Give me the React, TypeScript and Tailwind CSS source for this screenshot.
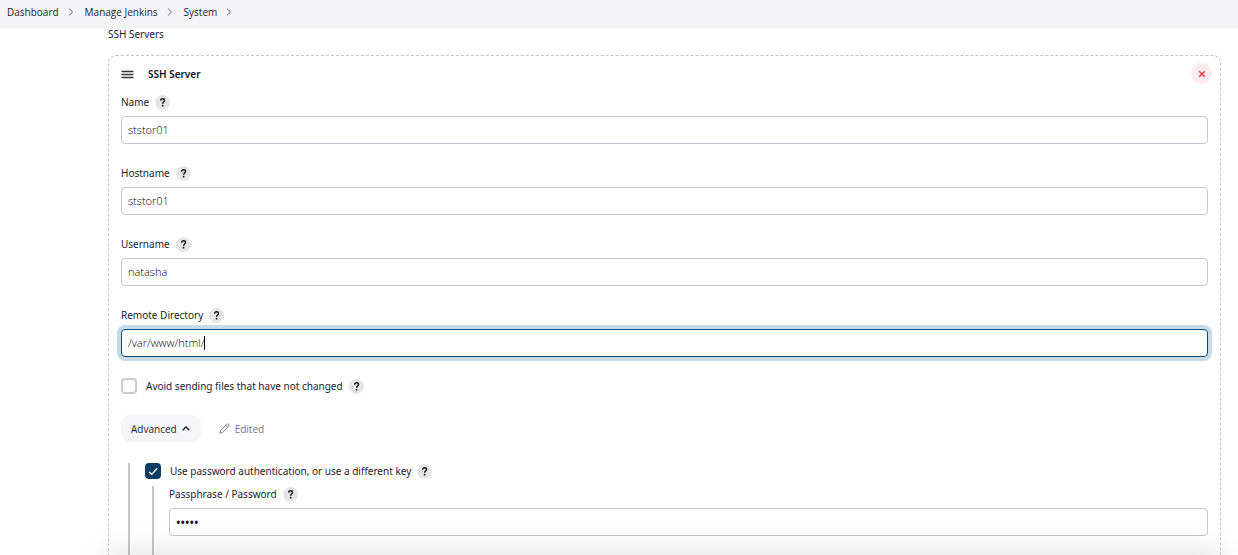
import { useState } from 'react'
import type { ReactNode } from 'react'

const breadcrumbs = ['Dashboard', 'Manage Jenkins', 'System']

const inputStyle =
  'h-7 w-full rounded border border-[#bfc9cf] bg-white px-[6px] pb-[2px] font-["Open_Sans",sans-serif] text-[11px] font-light text-black outline-none'

const passwordStyle =
  'h-7 w-full rounded border border-[#bfc9cf] bg-white px-[6px] font-["Noto_Sans",sans-serif] text-[12px] font-medium text-[#14141f] outline-none'

function HelpButton({ topic }: { topic: string }) {
  return (
    <button
      type="button"
      aria-label={`Help for feature: ${topic}`}
      className="flex size-[15px] shrink-0 items-center justify-center rounded-full bg-[#e6e6e6] text-[#14141f]"
    >
      <svg viewBox="0 0 15 15" className="size-[15px]" fill="none" stroke="currentColor">
        <path d="M5.7 5.7C5.7 4.5 6.5 3.8 7.6 3.8S9.5 4.5 9.5 5.5C9.5 6.9 7.6 7 7.6 8.7" strokeWidth="1.4" />
        <circle cx="7.6" cy="10.7" r="0.9" fill="currentColor" stroke="none" />
      </svg>
    </button>
  )
}

function Field({ id, label, children }: { id: string; label: string; children: ReactNode }) {
  return (
    <div className="flex flex-col gap-[6px]">
      <div className="flex h-4 items-center gap-[6px]">
        <label htmlFor={id}>{label}</label>
        <HelpButton topic={label} />
      </div>
      {children}
    </div>
  )
}

function Checkbox({ id, label, defaultChecked }: { id: string; label: string; defaultChecked?: boolean }) {
  return (
    <div className="flex h-4 items-center gap-[6px]">
      <label htmlFor={id} className="flex items-center gap-[9px]">
        <span className="grid size-4 place-items-center">
          <input
            id={id}
            type="checkbox"
            defaultChecked={defaultChecked}
            className="peer col-start-1 row-start-1 size-4 appearance-none rounded border-2 border-[#c3cdd3] bg-white checked:border-[#0b3d61] checked:bg-[#0b3d61]"
          />
          <svg
            viewBox="0 0 16 16"
            className="pointer-events-none col-start-1 row-start-1 hidden size-4 peer-checked:block"
            fill="none"
            stroke="white"
            strokeWidth="1.3"
            strokeLinecap="round"
            strokeLinejoin="round"
          >
            <path d="M4.5 9.2 6.8 11.4 11.8 5.8" />
          </svg>
        </span>
        {label}
      </label>
      <HelpButton topic={label} />
    </div>
  )
}

export default function App() {
  const [name, setName] = useState('ststor01')
  const [hostname, setHostname] = useState('ststor01')
  const [username, setUsername] = useState('natasha')
  const [remoteDir, setRemoteDir] = useState('/var/www/html/')
  const [password, setPassword] = useState('admin')
  const [advanced, setAdvanced] = useState(true)

  return (
    <div className='flex h-screen flex-col overflow-hidden bg-white font-["Noto_Sans",sans-serif] text-[10px] leading-4 text-[#22222e]'>
      <nav aria-label="Breadcrumb" className="h-[29px] shrink-0 bg-[#f5f5f7] px-[7px]">
        <ol className='flex h-6 items-center font-["Open_Sans",sans-serif] text-[10px] font-medium'>
          {breadcrumbs.map((crumb) => (
            <li key={crumb} className="flex items-center">
              <a href="#">{crumb}</a>
              <svg viewBox="0 0 26 10" className="h-[10px] w-[26px]" fill="none" stroke="#a0a0ac" strokeWidth="1.2">
                <path d="M10 1.5 13.500 5 10 8.5" />
              </svg>
            </li>
          ))}
        </ol>
      </nav>

      <main className="flex flex-1 flex-col pr-[17px] pl-[108px]">
        <h2 className="leading-[10px]">SSH Servers</h2>

        <section className="mt-4 flex flex-1 flex-col rounded-t-lg border border-b-0 border-dashed border-[#bfc6cc] px-3 pt-[7px]">
          <header className="-mr-1 flex h-[21px] items-center justify-between">
            <div className="flex items-center gap-[14px]">
              <svg viewBox="0 0 13 10" className="h-[10px] w-[13px]" stroke="#333340" strokeWidth="1.3">
                <path d="M0.5 2.5H12.5M0.5 5.5H12.5M0.5 8.5H12.5" />
              </svg>
              <h3 className="font-semibold text-[#14141f]">SSH Server</h3>
            </div>
            <button
              type="button"
              aria-label="Delete"
              className="flex size-[21px] items-center justify-center rounded-full bg-[#fdeaec] text-[#e6334a]"
            >
              <svg viewBox="0 0 8 8" className="size-2" stroke="currentColor" strokeWidth="1.3">
                <path d="M1.2 1.2 6.8 6.8M6.8 1.2 1.2 6.8" />
              </svg>
            </button>
          </header>

          <div className="mt-[10px] flex flex-1 flex-col gap-[21px]">
            <Field id="name" label="Name">
              <input id="name" className={inputStyle} value={name} onChange={(e) => setName(e.target.value)} />
            </Field>
            <Field id="hostname" label="Hostname">
              <input id="hostname" className={inputStyle} value={hostname} onChange={(e) => setHostname(e.target.value)} />
            </Field>
            <Field id="username" label="Username">
              <input id="username" className={inputStyle} value={username} onChange={(e) => setUsername(e.target.value)} />
            </Field>
            <Field id="remote" label="Remote Directory">
              <div className='flex h-7 items-center rounded border border-[#0b4a6f] bg-white px-[6px] font-["Open_Sans",sans-serif] text-[11px] font-light text-black ring-4 ring-[#c7dce8]'>
                <input
                  id="remote"
                  className="field-sizing-content bg-transparent caret-transparent outline-none"
                  value={remoteDir}
                  onChange={(e) => setRemoteDir(e.target.value)}
                />
                <span className="h-[14px] w-px bg-black" />
              </div>
            </Field>

            <Checkbox id="avoid" label="Avoid sending files that have not changed" />

            <div className='flex items-center gap-[18px] font-["Open_Sans",sans-serif] text-[10px] font-medium'>
              <button
                type="button"
                aria-expanded={advanced}
                onClick={() => setAdvanced(!advanced)}
                className="flex h-[27px] items-center gap-1 rounded-lg bg-[#f6f6f8] px-[10px]"
              >
                Advanced
                <svg viewBox="0 0 10 10" className="size-[10px]" fill="none" stroke="currentColor" strokeWidth="1.4">
                  <path d="M1.7 6.3 5 3 8.3 6.3" />
                </svg>
              </button>
              <span className="flex items-center gap-[5px] text-[#74748c]">
                <svg viewBox="0 0 11 11" className="size-[11px]" fill="none" stroke="currentColor" strokeWidth="0.9" strokeLinejoin="round">
                  <path d="M0.8 10.2 1.6 7.5 7.7 1.3C9 0 11 2 9.7 3.3L3.5 9.4ZM6.8 2.2 8.8 4.2" />
                </svg>
                Edited
              </span>
            </div>

            {advanced && (
              <div className="ml-[7px] flex flex-1 flex-col gap-[7px] border-l-2 border-[#bfcacf] pl-[15px]">
                <Checkbox id="use-password" label="Use password authentication, or use a different key" defaultChecked />
                <div className="ml-[7px] flex-1 border-l-2 border-[#bfcacf] pl-[15px]">
                  <Field id="password" label="Passphrase / Password">
                    <input
                      id="password"
                      type="password"
                      className={passwordStyle}
                      value={password}
                      onChange={(e) => setPassword(e.target.value)}
                    />
                  </Field>
                </div>
              </div>
            )}
          </div>
        </section>
      </main>

      {/* Save bar sits under the fold, only its shadow shows */}
      <div className="fixed top-full right-[17px] left-[108px] h-12 bg-white shadow-[0_0_32px_rgba(0,0,0,0.14)]" />
    </div>
  )
}
